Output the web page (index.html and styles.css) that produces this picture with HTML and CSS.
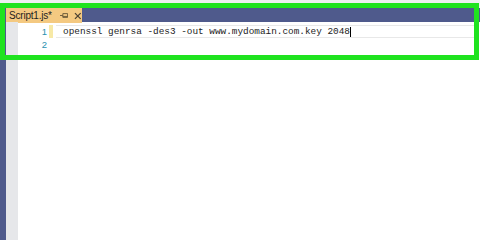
FILE: index.html
```html
<!DOCTYPE html>
<html>
<head>
<meta charset="utf-8">
<link rel="stylesheet" href="styles.css">
</head>
<body>
<div class="window">
  <div class="topstrip"></div>
  <div class="tabbar">
    <div class="tab">
      <span class="tab-title">Script1.js*</span>
      <svg class="pin" width="9" height="7" viewBox="0 0 9 7"><path d="M0 3.5H3M3 1.5V5.5M3 1.5H8V5.5H3M3 4.5H8" fill="none" stroke="#6a5a3a" stroke-width="1"/></svg>
      <svg class="close" width="8" height="8" viewBox="0 0 8 8"><path d="M1 1L7 7M7 1L1 7" stroke="#4a4030" stroke-width="1.3"/></svg>
    </div>
  </div>
  <div class="editor">
    <div class="sidebar"></div>
    <div class="margin"></div>
    <div class="code">
      <div class="line current">
        <span class="num">1</span><span class="change"></span><span class="text">openssl genrsa -des3 -out www.mydomain.com.key 2048</span><span class="caret"></span>
      </div>
      <div class="line">
        <span class="num">2</span><span class="change blank"></span><span class="text"></span>
      </div>
    </div>
  </div>
</div>
<div class="highlight"></div>
</body>
</html>
```
FILE: styles.css
```css
html, body {
  margin: 0;
  padding: 0;
  background: #ffffff;
  width: 480px;
  height: 240px;
  overflow: hidden;
}
.window {
  display: flex;
  flex-direction: column;
  height: 240px;
}
.topstrip {
  height: 8px;
  background: #eef0f2;
}
.tabbar {
  height: 14px;
  background: #4f5a8c;
  display: flex;
  align-items: flex-end;
  padding-left: 6px;
}
.tab {
  height: 15px;
  width: 76px;
  margin-bottom: -1px;
  background: #f4c981;
  display: flex;
  align-items: center;
  padding-left: 3px;
  box-sizing: border-box;
  font-family: "Liberation Sans", Arial, sans-serif;
  font-size: 10px;
  color: #1e1e1e;
}
.tab-title {
  letter-spacing: -0.2px;
}
.pin {
  margin-left: 8px;
}
.close {
  margin-left: 6px;
}
.editor {
  flex: 1;
  display: flex;
}
.sidebar {
  width: 6px;
  background: #4f5a8c;
}
.margin {
  width: 12px;
  background: #e6e7ea;
}
.code {
  flex: 1;
  padding-top: 3px;
  font-family: "Liberation Mono", "DejaVu Sans Mono", monospace;
  font-size: 9.4px;
  color: #222;
}
.line {
  height: 13px;
  display: flex;
  align-items: center;
  position: relative;
}
.line.current::after {
  content: "";
  position: absolute;
  left: 38px;
  right: 5px;
  top: 0;
  bottom: 0;
  border: 1px solid #e8e8e8;
  border-left: none;
}
.num {
  width: 29px;
  text-align: right;
  color: #2b91af;
  font-family: "Liberation Sans", Arial, sans-serif;
  font-size: 9.5px;
}
.change {
  width: 4px;
  height: 13px;
  margin-left: 2px;
  background: #f7e9a6;
}
.change.blank {
  background: transparent;
}
.text {
  margin-left: 10px;
  white-space: pre;
}
.caret {
  width: 1px;
  height: 10px;
  background: #000;
}
.highlight {
  position: absolute;
  left: 0;
  top: 3px;
  width: 479px;
  height: 57px;
  border: 5px solid #1fe31f;
  box-sizing: border-box;
}
```
